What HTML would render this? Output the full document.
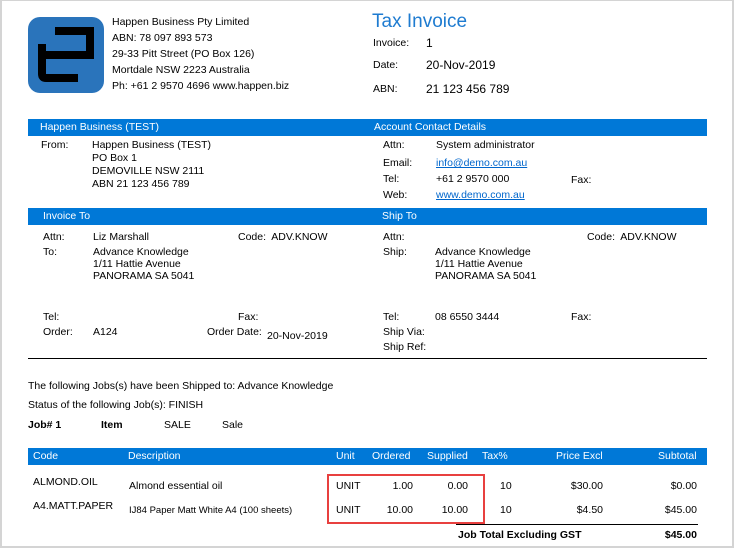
<!DOCTYPE html>
<html><head><meta charset="utf-8"><style>
body{margin:0;width:734px;height:548px;overflow:hidden;background:#fff;font-family:"Liberation Sans",Tahoma,sans-serif;font-size:10.5px;color:#000;position:relative}
.frame{position:absolute;left:0;top:0;width:730px;height:545px;border:2px solid #d4d4d4;border-top-width:1px;border-bottom-width:2px;box-sizing:content-box}
.t{position:absolute;white-space:nowrap;line-height:13px}
.bar{position:absolute;background:#0078d7;height:17px}
.w{color:#fff}
a{color:#0066cc;text-decoration:underline}
.b{font-weight:bold}
.r{text-align:right}
</style></head><body>
<div class="frame"></div>
<svg style="position:absolute;left:28px;top:17px" width="76" height="76" viewBox="0 0 76 76">
<rect x="0" y="0" width="76" height="76" rx="12" fill="#2a74bb"/>
<path d="M27 14 H62 V38 M10 38 H66 M14 27 V57 Q14 61 18 61 H50" fill="none" stroke="#000" stroke-width="8"/>
</svg>
<div class="t" style="left:112px;top:16px">Happen Business Pty Limited</div>
<div class="t" style="left:112px;top:32px">ABN: 78 097 893 573</div>
<div class="t" style="left:112px;top:48px">29-33 Pitt Street (PO Box 126)</div>
<div class="t" style="left:112px;top:64px">Mortdale NSW 2223 Australia</div>
<div class="t" style="left:112px;top:80px">Ph: +61 2 9570 4696 www.happen.biz</div>

<div class="t" style="left:372px;top:11px;font-size:19px;line-height:22px;color:#1e7bd0">Tax Invoice</div>
<div class="t" style="left:373px;top:37px">Invoice:</div><div class="t" style="left:426px;top:37px;font-size:12px">1</div>
<div class="t" style="left:373px;top:59px">Date:</div><div class="t" style="left:426px;top:59px;font-size:12px">20-Nov-2019</div>
<div class="t" style="left:373px;top:83px">ABN:</div><div class="t" style="left:426px;top:83px;font-size:12px">21 123 456 789</div>

<div class="bar" style="left:28px;top:119px;width:679px"></div>
<div class="t w" style="left:40px;top:121px">Happen Business (TEST)</div>
<div class="t w" style="left:374px;top:121px">Account Contact Details</div>
<div class="t" style="left:41px;top:139px">From:</div>
<div class="t" style="left:92px;top:139px">Happen Business (TEST)</div>
<div class="t" style="left:92px;top:152px">PO Box 1</div>
<div class="t" style="left:92px;top:165px">DEMOVILLE NSW 2111</div>
<div class="t" style="left:92px;top:178px">ABN 21 123 456 789</div>
<div class="t" style="left:383px;top:139px">Attn:</div><div class="t" style="left:436px;top:139px">System administrator</div>
<div class="t" style="left:383px;top:157px">Email:</div><div class="t" style="left:436px;top:157px"><a>info@demo.com.au</a></div>
<div class="t" style="left:383px;top:173px">Tel:</div><div class="t" style="left:436px;top:173px;width:73px;overflow:hidden">+61 2 9570 0000</div>
<div class="t" style="left:571px;top:174px">Fax:</div>
<div class="t" style="left:383px;top:189px">Web:</div><div class="t" style="left:436px;top:189px"><a>www.demo.com.au</a></div>

<div class="bar" style="left:28px;top:208px;width:679px"></div>
<div class="t w" style="left:43px;top:210px">Invoice To</div>
<div class="t w" style="left:382px;top:210px">Ship To</div>
<div class="t" style="left:43px;top:231px">Attn:</div><div class="t" style="left:93px;top:231px">Liz Marshall</div>
<div class="t" style="left:238px;top:231px">Code:&nbsp; ADV.KNOW</div>
<div class="t" style="left:43px;top:246px">To:</div>
<div class="t" style="left:93px;top:246px">Advance Knowledge</div>
<div class="t" style="left:93px;top:258px">1/11 Hattie Avenue</div>
<div class="t" style="left:93px;top:270px">PANORAMA SA 5041</div>
<div class="t" style="left:383px;top:231px">Attn:</div>
<div class="t" style="left:587px;top:231px">Code:&nbsp; ADV.KNOW</div>
<div class="t" style="left:383px;top:246px">Ship:</div>
<div class="t" style="left:435px;top:246px">Advance Knowledge</div>
<div class="t" style="left:435px;top:258px">1/11 Hattie Avenue</div>
<div class="t" style="left:435px;top:270px">PANORAMA SA 5041</div>
<div class="t" style="left:43px;top:311px">Tel:</div><div class="t" style="left:238px;top:311px">Fax:</div>
<div class="t" style="left:43px;top:326px">Order:</div><div class="t" style="left:93px;top:326px">A124</div>
<div class="t" style="left:207px;top:326px">Order Date:</div><div class="t" style="left:267px;top:330px">20-Nov-2019</div>
<div class="t" style="left:383px;top:311px">Tel:</div><div class="t" style="left:435px;top:311px">08 6550 3444</div>
<div class="t" style="left:571px;top:311px">Fax:</div>
<div class="t" style="left:383px;top:326px">Ship Via:</div>
<div class="t" style="left:383px;top:341px">Ship Ref:</div>
<div style="position:absolute;left:28px;top:358px;width:679px;height:1px;background:#000"></div>

<div class="t" style="left:28px;top:380px">The following Jobs(s) have been Shipped to: Advance Knowledge</div>
<div class="t" style="left:28px;top:399px">Status of the following Job(s): FINISH</div>
<div class="t b" style="left:28px;top:419px">Job# 1</div>
<div class="t b" style="left:101px;top:419px">Item</div>
<div class="t" style="left:164px;top:419px">SALE</div>
<div class="t" style="left:222px;top:419px">Sale</div>

<div class="bar" style="left:28px;top:448px;width:679px"></div>
<div class="t w" style="left:33px;top:450px">Code</div>
<div class="t w" style="left:128px;top:450px">Description</div>
<div class="t w" style="left:336px;top:450px">Unit</div>
<div class="t w" style="left:372px;top:450px">Ordered</div>
<div class="t w" style="left:427px;top:450px">Supplied</div>
<div class="t w" style="left:482px;top:450px">Tax%</div>
<div class="t w" style="left:556px;top:450px">Price Excl</div>
<div class="t w" style="left:658px;top:450px">Subtotal</div>

<div class="t" style="left:33px;top:476px">ALMOND.OIL</div>
<div class="t" style="left:129px;top:480px">Almond essential oil</div>
<div class="t" style="left:336px;top:480px">UNIT</div>
<div class="t r" style="left:340px;width:73px;top:480px">1.00</div>
<div class="t r" style="left:400px;width:68px;top:480px">0.00</div>
<div class="t" style="left:500px;top:480px">10</div>
<div class="t r" style="left:500px;width:103px;top:480px">$30.00</div>
<div class="t r" style="left:600px;width:97px;top:480px">$0.00</div>

<div class="t" style="left:33px;top:500px">A4.MATT.PAPER</div>
<div class="t" style="left:129px;top:504px;font-size:9.5px">IJ84 Paper Matt White A4 (100 sheets)</div>
<div class="t" style="left:336px;top:504px">UNIT</div>
<div class="t r" style="left:340px;width:73px;top:504px">10.00</div>
<div class="t r" style="left:400px;width:68px;top:504px">10.00</div>
<div class="t" style="left:500px;top:504px">10</div>
<div class="t r" style="left:500px;width:103px;top:504px">$4.50</div>
<div class="t r" style="left:600px;width:97px;top:504px">$45.00</div>

<div style="position:absolute;left:327px;top:474px;width:154px;height:46px;border:2px solid #e8403f"></div>
<div style="position:absolute;left:456px;top:524px;width:242px;height:1px;background:#000"></div>
<div class="t b" style="left:458px;top:529px">Job Total Excluding GST</div>
<div class="t b r" style="left:600px;width:97px;top:529px">$45.00</div>
</body></html>
